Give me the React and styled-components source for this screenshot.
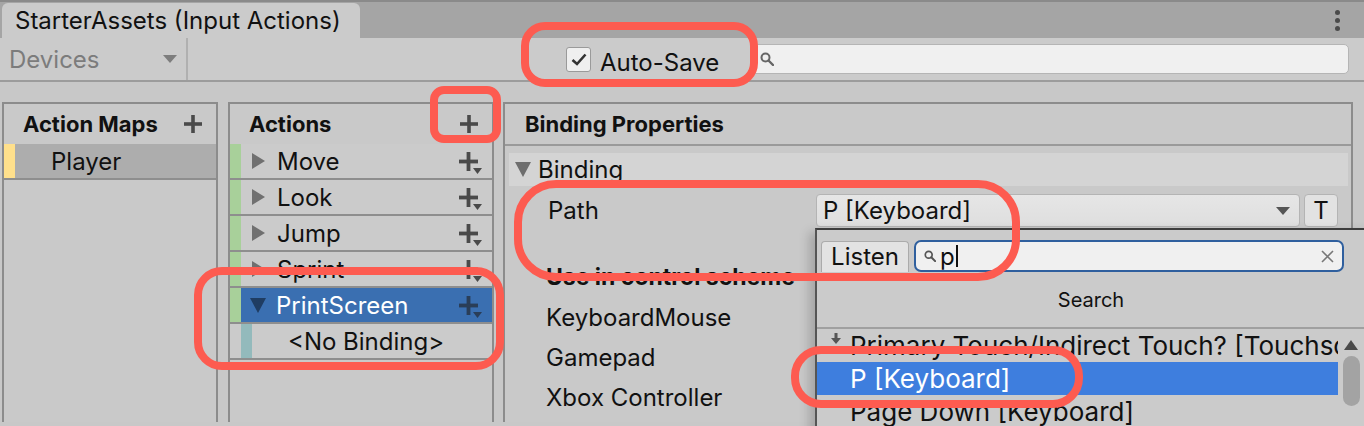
import styled, { createGlobalStyle } from "styled-components";

const Global = createGlobalStyle`
  html, body {
    margin: 0;
    padding: 0;
    background: #c8c8c8;
    font-family: Inter, "Noto Sans", sans-serif;
    overflow: hidden;
  }
`;

const Window = styled.div`
  position: relative;
  width: 1364px;
  height: 426px;
  overflow: hidden;
  background: #c8c8c8;
  color: #111;
  font-size: 24px;
`;

const TabBar = styled.div`
  height: 36px;
  border-top: 2px solid #8a8a8a;
  background: #a5a5a5;
  display: flex;
  align-items: flex-end;
  padding-left: 2px;
`;

const Tab = styled.div`
  height: 35px;
  width: 358px;
  box-sizing: border-box;
  background: #cbcbcb;
  border-radius: 6px 6px 0 0;
  padding-left: 13px;
  display: flex;
  align-items: center;
  font-size: 24px;
  color: #111;
`;

const MenuDots = styled.div`
  margin-left: auto;
  margin-right: 24px;
  align-self: center;
  display: flex;
  flex-direction: column;
  gap: 3px;
  span {
    width: 5px;
    height: 5px;
    border-radius: 50%;
    background: #4a4a4a;
  }
`;

const Toolbar = styled.div`
  height: 42px;
  background: #cbcbcb;
  border-bottom: 2px solid #9c9c9c;
  display: flex;
  align-items: center;
`;

const Devices = styled.div`
  width: 177px;
  height: 100%;
  border-right: 2px solid #b0b0b0;
  display: flex;
  align-items: center;
  padding-left: 9px;
  color: #7c7c7c;
  font-size: 24px;
`;

const Caret = styled.span`
  width: 0;
  height: 0;
  border-left: 7px solid transparent;
  border-right: 7px solid transparent;
  border-top: 8px solid ${(p) => p.$color || "#6a6a6a"};
  margin-left: auto;
  margin-right: ${(p) => p.$mr || 10}px;
`;

const AutoSave = styled.label`
  display: flex;
  align-items: center;
  margin-left: 378px;
  font-size: 24px;
  color: #111;
  gap: 9px;
  span:last-child {
    padding-top: 7px;
  }
`;

const Check = styled.span`
  width: 25px;
  height: 25px;
  box-sizing: border-box;
  border: 1px solid #9a9a9a;
  border-radius: 3px;
  background: #efefef;
  display: flex;
  align-items: center;
  justify-content: center;
`;

const SearchField = styled.div`
  margin-left: auto;
  margin-right: 15px;
  width: 598px;
  height: 30px;
  box-sizing: border-box;
  background: #f0f0f0;
  border: 1px solid #b5b5b5;
  border-radius: 5px;
  display: flex;
  align-items: center;
  padding-left: 8px;
`;

const Main = styled.div`
  display: flex;
  padding: 20px 0 0 2px;
  height: 320px;
`;

const Panel = styled.div`
  width: ${(p) => p.$w}px;
  margin-right: ${(p) => p.$gap || 0}px;
  border: 2px solid #8c8c8c;
  border-bottom: none;
  box-sizing: border-box;
  background: #c9c9c9;
  display: flex;
  flex-direction: column;
`;

const PanelHeader = styled.div`
  height: 40px;
  display: flex;
  align-items: center;
  padding-left: ${(p) => p.$pl || 19}px;
  padding-right: 14px;
  font-weight: 700;
  font-size: 22px;
  border-bottom: ${(p) => (p.$line ? "2px solid #9a9a9a" : "none")};
  justify-content: space-between;
`;

const Row = styled.div`
  height: 34px;
  border-bottom: 2px solid #8e8e8e;
  display: flex;
  align-items: center;
  background: ${(p) => (p.$selected ? "#3a6fb1" : p.$bg || "#cbcbcb")};
  color: ${(p) => (p.$selected ? "#fff" : "#111")};
  font-size: 24px;
`;

const Strip = styled.span`
  width: 11px;
  align-self: stretch;
  background: ${(p) => p.$color || "transparent"};
  flex: none;
`;

const Fold = styled.span`
  width: 0;
  height: 0;
  ${(p) =>
    p.$open
      ? `border-left: 8px solid transparent; border-right: 8px solid transparent; border-top: 15px solid ${p.$color};`
      : `border-top: 8px solid transparent; border-bottom: 8px solid transparent; border-left: 13px solid ${p.$color};`}
  margin: ${(p) =>
    p.$tight ? "0 7px 0 2px" : p.$open ? "0 10px 0 9px" : "0 12px 0 11px"};
`;

const RowPlus = styled.span`
  margin-left: auto;
  margin-right: 14px;
  position: relative;
  display: flex;
`;

const BindingBody = styled.div`
  padding: 7px 3px 0 4px;
  position: relative;
  flex: 1;
`;

const Foldout = styled.div`
  height: 33px;
  background: #d4d4d4;
  display: flex;
  align-items: center;
  font-size: 24px;
  padding-left: 4px;
`;

const PathRow = styled.div`
  display: flex;
  align-items: center;
  margin-top: 8px;
  height: 33px;
`;

const FieldLabel = styled.span`
  width: 307px;
  padding-left: 39px;
  box-sizing: border-box;
  font-size: 24px;
`;

const PathDropdown = styled.div`
  width: 484px;
  height: 33px;
  box-sizing: border-box;
  border: 1px solid #b4b4b4;
  border-radius: 4px;
  background: linear-gradient(#e6e6e6, #dedede);
  display: flex;
  align-items: center;
  padding-left: 6px;
  font-size: 24px;
`;

const TButton = styled.div`
  width: 34px;
  height: 33px;
  box-sizing: border-box;
  margin-left: 4px;
  border: 1px solid #b4b4b4;
  border-radius: 4px;
  background: #e2e2e2;
  display: flex;
  align-items: center;
  justify-content: center;
  font-size: 24px;
`;

const Scheme = styled.div`
  padding-left: 37px;
  height: 40px;
  display: flex;
  align-items: center;
  white-space: nowrap;
  font-size: ${(p) => (p.$bold ? 23 : 24)}px;
  font-weight: ${(p) => (p.$bold ? 700 : 400)};
  margin-top: ${(p) => p.$mt || 0}px;
`;

const Popup = styled.div`
  position: absolute;
  left: 815px;
  top: 228px;
  width: 560px;
  height: 210px;
  background: #cbcbcb;
  border-top: 2px solid #3d3d3d;
  border-left: 2px solid #555;
  box-shadow: -6px 4px 10px rgba(0, 0, 0, 0.18);
`;

const PopupTop = styled.div`
  display: flex;
  align-items: center;
  padding: 10px 0 0 4px;
  gap: 5px;
`;

const ListenButton = styled.div`
  width: 88px;
  height: 31px;
  box-sizing: border-box;
  border: 1px solid #ababab;
  border-bottom: none;
  border-radius: 4px 4px 0 0;
  background: #e3e3e3;
  display: flex;
  align-items: center;
  justify-content: center;
  font-size: 24px;
`;

const PopupSearch = styled.div`
  width: 430px;
  height: 32px;
  box-sizing: border-box;
  border: 2px solid #2f5f9e;
  border-radius: 7px;
  background: #f0f0f0;
  display: flex;
  align-items: center;
  padding-left: 8px;
  font-size: 24px;
  color: #111;
`;

const Cursor = styled.span`
  width: 2px;
  height: 22px;
  background: #111;
  margin-left: 1px;
`;

const SearchTitle = styled.div`
  height: 55px;
  display: flex;
  align-items: center;
  justify-content: center;
  padding-right: 12px;
  font-size: 20px;
  border-bottom: 2px solid #a0a0a0;
`;

const List = styled.div`
  display: flex;
`;

const Items = styled.div`
  width: 521px;
  overflow: hidden;
`;

const Item = styled.div`
  height: 33px;
  display: flex;
  align-items: center;
  padding-left: 33px;
  white-space: nowrap;
  font-size: 26px;
  background: ${(p) => (p.$selected ? "#3e7ede" : "transparent")};
  color: ${(p) => (p.$selected ? "#fff" : "#111")};
  position: relative;
`;

const Scrollbar = styled.div`
  width: 26px;
  display: flex;
  flex-direction: column;
  align-items: center;
  padding-top: 11px;
  gap: 6px;
`;

const Thumb = styled.div`
  width: 17px;
  height: 50px;
  border-radius: 9px;
  background: #a3a3a3;
`;

const Mark = styled.div`
  position: absolute;
  left: ${(p) => p.$x}px;
  top: ${(p) => p.$y}px;
  width: ${(p) => p.$w}px;
  height: ${(p) => p.$h}px;
  box-sizing: border-box;
  border: 8px solid #fd5b50;
  border-radius: ${(p) => p.$r}px;
  pointer-events: none;
`;

const Plus = ({ size = 20, color = "#4a4a4a", w = 4 }) => (
  <svg width={size} height={size} viewBox="0 0 20 20">
    <rect x={10 - w / 2} y="0" width={w} height="20" fill={color} />
    <rect x="0" y={10 - w / 2} width="20" height={w} fill={color} />
  </svg>
);

const AddBinding = ({ color = "#4a4a4a" }) => (
  <RowPlus>
    <Plus size={19} color={color} w={4} />
    <svg
      width="9"
      height="6"
      viewBox="0 0 9 6"
      style={{ position: "absolute", left: 14, top: 16 }}
    >
      <path d="M0 0 H9 L4.5 6 Z" fill={color} />
    </svg>
  </RowPlus>
);

const Magnifier = ({ size = 14, color = "#666" }) => (
  <svg width={size} height={size} viewBox="0 0 14 14">
    <circle cx="5.5" cy="5.5" r="4" fill="none" stroke={color} strokeWidth="2" />
    <path d="M8.5 8.5 L13 13" stroke={color} strokeWidth="2.4" strokeLinecap="round" />
  </svg>
);

const actions = ["Move", "Look", "Jump", "Sprint"];

export default function App() {
  return (
    <Window>
      <Global />
      <TabBar>
        <Tab>StarterAssets (Input Actions)</Tab>
        <MenuDots>
          <span />
          <span />
          <span />
        </MenuDots>
      </TabBar>
      <Toolbar>
        <Devices>
          Devices
          <Caret $color="#7d7d7d" $mr={9} />
        </Devices>
        <AutoSave>
          <Check>
            <svg width="16" height="13" viewBox="0 0 16 13">
              <path
                d="M1.5 7 L6 11 L14.5 1.5"
                fill="none"
                stroke="#333"
                strokeWidth="2.6"
              />
            </svg>
          </Check>
          <span>Auto-Save</span>
        </AutoSave>
        <SearchField>
          <Magnifier />
        </SearchField>
      </Toolbar>

      <Main>
        <Panel $w={216} $gap={10}>
          <PanelHeader>
            Action Maps
            <Plus size={18} />
          </PanelHeader>
          <Row $bg="#adadad">
            <Strip $color="#ffe08c" />
            <span style={{ paddingLeft: 36 }}>Player</span>
          </Row>
        </Panel>

        <Panel $w={266} $gap={9}>
          <PanelHeader>
            Actions
            <Plus size={18} />
          </PanelHeader>
          {actions.map((a) => (
            <Row key={a}>
              <Strip $color="#a8d09a" />
              <Fold $color="#707070" />
              {a}
              <AddBinding />
            </Row>
          ))}
          <Row $selected>
            <Strip $color="#a8d09a" />
            <Fold $open $color="#1f3d63" />
            PrintScreen
            <AddBinding color="#2a3e58" />
          </Row>
          <Row>
            <Strip />
            <Strip $color="#93babc" />
            <span style={{ paddingLeft: 36 }}>&lt;No Binding&gt;</span>
          </Row>
        </Panel>

        <Panel $w={850}>
          <PanelHeader $pl={20} $line>
            Binding Properties
          </PanelHeader>
          <BindingBody>
            <Foldout>
              <Fold $open $tight $color="#6e6e6e" />
              Binding
            </Foldout>
            <PathRow>
              <FieldLabel>Path</FieldLabel>
              <PathDropdown>
                P [Keyboard]
                <Caret $color="#555" $mr={9} />
              </PathDropdown>
              <TButton>T</TButton>
            </PathRow>
            <Scheme $bold $mt={30}>
              Use in control scheme
            </Scheme>
            <Scheme>KeyboardMouse</Scheme>
            <Scheme>Gamepad</Scheme>
            <Scheme>Xbox Controller</Scheme>
          </BindingBody>
        </Panel>
      </Main>

      <Popup>
        <PopupTop>
          <ListenButton>Listen</ListenButton>
          <PopupSearch>
            <Magnifier size={12} color="#555" />
            <span style={{ marginLeft: 4 }}>p</span>
            <Cursor />
            <svg
              width="13"
              height="13"
              viewBox="0 0 13 13"
              style={{ marginLeft: "auto", marginRight: 8 }}
            >
              <path d="M1 1 L12 12 M12 1 L1 12" stroke="#777" strokeWidth="1.6" />
            </svg>
          </PopupSearch>
        </PopupTop>
        <SearchTitle>Search</SearchTitle>
        <List>
          <Items>
            <Item>
              <svg
                width="12"
                height="12"
                viewBox="0 0 12 12"
                style={{ position: "absolute", left: 13, top: 4 }}
              >
                <path d="M4.5 0 H7.5 V5 H11 L6 11 L1 5 H4.5 Z" fill="#555" />
              </svg>
              Primary Touch/Indirect Touch? [Touchscreen]
            </Item>
            <Item $selected>P [Keyboard]</Item>
            <Item>Page Down [Keyboard]</Item>
          </Items>
          <Scrollbar>
            <svg width="14" height="10" viewBox="0 0 14 10">
              <path d="M0 10 L7 0 L14 10 Z" fill="#4a4a4a" />
            </svg>
            <Thumb />
          </Scrollbar>
        </List>
      </Popup>

      <Mark $x={521} $y={22} $w={237} $h={65} $r={24} />
      <Mark $x={430} $y={86} $w={71} $h={57} $r={14} />
      <Mark $x={194} $y={267} $w={310} $h={103} $r={28} />
      <Mark $x={514} $y={180} $w={506} $h={101} $r={42} />
      <Mark $x={791} $y={346} $w={292} $h={62} $r={30} />
    </Window>
  );
}
